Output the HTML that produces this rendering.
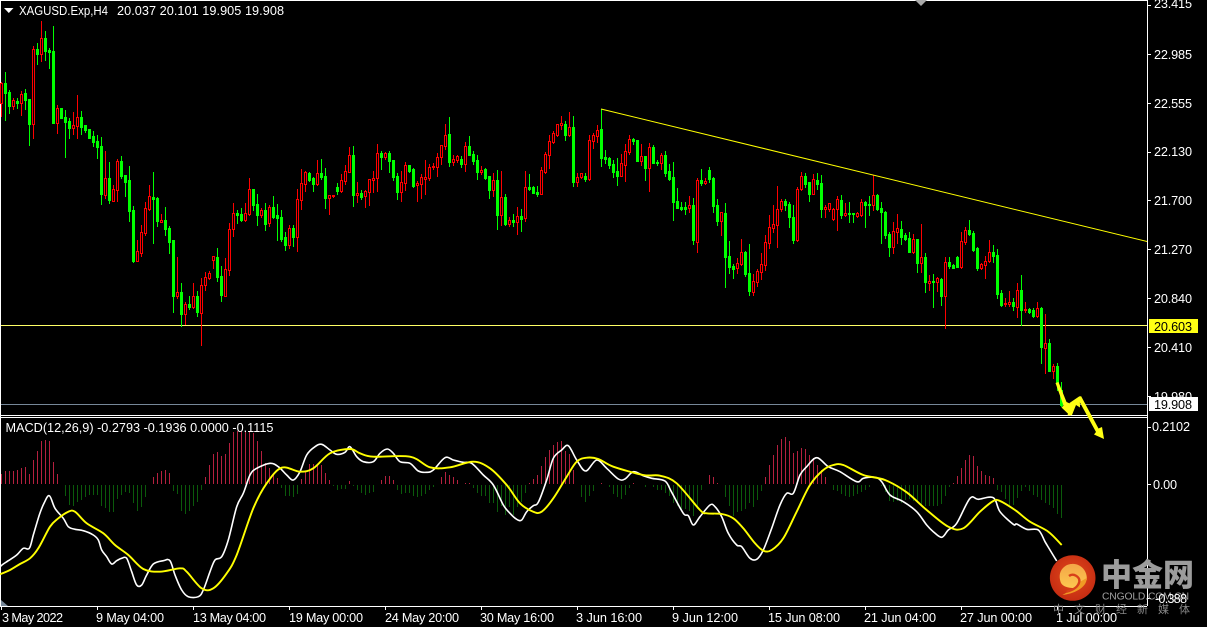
<!DOCTYPE html>
<html><head><meta charset="utf-8"><title>XAGUSD.Exp,H4</title>
<style>
html,body{margin:0;padding:0;background:#000;width:1207px;height:627px;overflow:hidden}
svg{display:block;position:absolute;left:0;top:0}
text{font-family:"Liberation Sans","Noto Sans CJK SC",sans-serif;font-size:12.7px;fill:#fff}
.c{shape-rendering:crispEdges}
</style></head><body>
<svg id="s" width="1207" height="627" viewBox="0 0 1207 627" xmlns="http://www.w3.org/2000/svg">
<rect width="1207" height="627" fill="#000"/>
<g class="c">
<path d="M0 .5H1147M.5 0V606M1147.5 0V606M0 415.5H1147M0 417.5H1147M0 606.5H1147" stroke="#fff" fill="none"/>
<path d="M1148 5.5h3M1148 54.5h3M1148 103.5h3M1148 152.5h3M1148 200.5h3M1148 249.5h3M1148 298.5h3M1148 347.5h3M1148 396.5h3M1148 427.5h3M1148 484.5h3M1148 598.5h3" stroke="#fff"/>
<path d="M1.5 606v4M97.5 606v4M193.5 606v4M289.5 606v4M385.5 606v4M481.5 606v4M577.5 606v4M673.5 606v4M769.5 606v4M865.5 606v4M961.5 606v4M1057.5 606v4" stroke="#fff"/>
<path d="M1 325.5H1147" stroke="#ffff66"/>
<path d="M1 404.5H1147" stroke="#778899"/>
</g>
<path d="M915 0h12l-6 6z" fill="#a9a9a9"/>
<path d="M1 600l7 6H1z" fill="#778899"/>
<path d="M4 8h9.5l-4.7 5z" fill="#fff"/>
<g id="hist" class="c"></g>
<g id="cand" class="c"></g>
<polyline points="601,109 1147,241.5" fill="none" stroke="#ffff00" stroke-width="1"/>
<g id="macd"></g>

<!-- yellow arrows -->
<path d="M1055.5 383L1058.5 382 1066.5 402 1072 404.5 1070.5 416 1061.5 407.5 1063.5 405.5z" fill="#ffff14"/>
<path d="M1067.5 415.5L1070 405 1069.5 403 1079.8 396 1080 407.5 1076 405 1072 415z" fill="#ffff14"/>
<path d="M1077.5 398L1081 396 1098.5 428.5 1102 427 1104 439 1094 434.5 1096 432z" fill="#ffff14"/>

<!-- axis labels -->
<text x="1154" y="8" textLength="38">23.415</text>
<text x="1154" y="59" textLength="38">22.985</text>
<text x="1154" y="108" textLength="38">22.555</text>
<text x="1154" y="156" textLength="38">22.130</text>
<text x="1154" y="205" textLength="38">21.700</text>
<text x="1154" y="254" textLength="38">21.270</text>
<text x="1154" y="303" textLength="38">20.840</text>
<text x="1154" y="352" textLength="38">20.410</text>
<text x="1154" y="401" textLength="38">19.980</text>
<rect x="1149" y="319" width="49" height="14" fill="#ffff14"/>
<text x="1154" y="331" textLength="38" style="fill:#000">20.603</text>
<rect x="1149" y="397" width="49" height="14" fill="#fff"/>
<text x="1154" y="409" textLength="38" style="fill:#000">19.908</text>
<text x="1152" y="431" textLength="38">0.2102</text>
<text x="1153" y="489" textLength="24">0.00</text>

<text x="19" y="15" textLength="89" lengthAdjust="spacingAndGlyphs">XAGUSD.Exp,H4</text>
<text x="117" y="15" textLength="167">20.037 20.101 19.905 19.908</text>
<text x="5.5" y="432" textLength="268" lengthAdjust="spacingAndGlyphs">MACD(12,26,9) -0.2793 -0.1936 0.0000 -0.1115</text>

<text x="2" y="622" textLength="61">3 May 2022</text>
<text x="96" y="622" textLength="68">9 May 04:00</text>
<text x="193" y="622" textLength="73">13 May 04:00</text>
<text x="289" y="622" textLength="74">19 May 00:00</text>
<text x="385" y="622" textLength="74">24 May 20:00</text>
<text x="480" y="622" textLength="74">30 May 16:00</text>
<text x="576" y="622" textLength="66">3 Jun 16:00</text>
<text x="672" y="622" textLength="66">9 Jun 12:00</text>
<text x="768" y="622" textLength="72">15 Jun 08:00</text>
<text x="864" y="622" textLength="72">21 Jun 04:00</text>
<text x="960" y="622" textLength="72">27 Jun 00:00</text>
<text x="1056" y="622" textLength="61">1 Jul 00:00</text>

<!-- watermark -->
<defs>
<radialGradient id="lg" cx=".5" cy=".45" r=".55"><stop offset="0" stop-color="#e24a1c"/><stop offset="1" stop-color="#c52c12"/></radialGradient>
<linearGradient id="lc" x1="0" y1="0" x2="0" y2="1"><stop offset="0" stop-color="#f3a647"/><stop offset="1" stop-color="#fdc850"/></linearGradient>
</defs>
<circle cx="1072.7" cy="578" r="22.8" fill="url(#lg)"/>
<path d="M1071.7 564C1080 563 1088 571 1086.7 580L1079 587C1073 589 1064 588 1061 583C1059 578 1059 572 1063 568C1066 565 1069 564 1071.7 564z" fill="url(#lc)"/>
<path d="M1062.3 595C1073 594 1087 588 1086.7 578L1078 583C1076 588 1070 591 1062.3 595z" fill="#f09a24"/>
<path d="M1069 576C1073.3 572.7 1080 576.7 1079.3 581.7C1078.3 586.7 1073.3 590 1066.7 591.7" fill="none" stroke="#d8401a" stroke-width="2.4"/>
<text x="1101" y="586" style="font-family:'Noto Sans CJK SC',sans-serif;font-size:31px;font-weight:900;fill:#9c9c9c" textLength="93">中金网</text>
<text x="1102" y="599.5" style="font-size:10.3px;fill:#a0a0a0" textLength="87">CNGOLD.COM.CN</text>
<text x="1053" y="613" style="font-family:'Noto Sans CJK SC',sans-serif;font-size:11px;fill:#888" textLength="137">中文财经新媒体</text>
<text x="1155" y="603" textLength="32">-0.388</text>
</svg>
<script>
var cd="r82,83,103,116 g72,83,93,120 g90,92,106,113 r98,100,106,109 g98,101,103,108 r91,94,103,115 g89,93,100,109 g99,99,124,145 r46,49,124,138 g43,49,54,64 r21,38,54,61 g31,38,51,60 g48,50,52,68 g26,51,123,123 r105,108,123,133 g108,108,118,118 g110,117,122,157 g118,121,128,138 r112,125,128,134 r95,117,126,138 g111,117,127,134 g125,125,130,132 g129,129,138,138 g131,136,142,146 g135,141,147,158 g137,146,194,204 r151,178,195,198 g162,178,200,203 r185,189,201,201 r159,161,190,201 g156,161,176,178 g175,175,182,196 g166,180,211,221 g206,210,261,262 r240,251,261,261 r225,232,253,256 r202,208,233,235 r185,196,209,210 g172,197,199,243 g197,198,221,226 r214,220,222,222 g207,220,229,235 g226,228,242,253 g240,240,296,312 r257,292,296,298 g283,292,314,326 r302,304,314,324 g296,304,307,309 r283,296,307,308 g291,296,312,316 r278,285,313,345 r272,277,285,290 r271,273,278,279 r256,256,260,268 g248,257,277,281 g266,276,295,301 r258,269,296,296 r223,229,270,275 r203,213,229,236 g210,213,215,223 g208,214,220,221 r203,213,220,221 r178,189,214,215 g189,189,205,210 g194,204,215,225 r208,210,215,217 g203,210,224,230 r205,207,223,226 g196,207,217,218 g204,215,218,240 g210,217,239,241 g232,237,245,250 r225,228,245,248 g225,228,237,246 r189,199,237,251 r169,183,200,209 r171,172,184,191 g172,173,180,181 g177,178,184,191 r160,173,184,185 g159,173,177,179 g168,176,198,208 r195,195,198,214 r195,195,196,197 g183,187,191,194 r174,180,191,192 r165,171,181,184 r147,155,172,172 g146,155,195,206 r182,193,195,202 g190,193,197,199 r190,191,196,207 r179,179,192,205 r171,178,180,192 r144,153,178,191 g151,153,157,169 r152,153,157,159 g151,153,161,172 g160,160,177,180 g173,176,192,199 r171,182,192,201 r162,165,183,190 g165,165,171,172 g168,169,186,187 r181,183,185,201 r174,177,184,198 r160,177,179,194 r164,167,178,180 r163,166,167,169 r153,157,167,176 r145,145,157,164 r124,135,146,149 g117,134,162,166 r155,159,162,165 r155,156,160,162 g156,159,164,167 r142,146,164,171 g136,146,155,155 g151,154,161,164 g155,160,172,179 r166,170,172,174 g168,169,178,179 g176,176,190,198 r173,180,190,196 g170,180,215,229 r171,197,215,225 g194,197,224,225 r217,220,224,226 g214,220,222,226 r207,216,222,234 g209,216,219,231 r171,187,218,221 g174,187,189,190 g186,187,193,193 g186,192,194,196 r167,170,194,194 r152,154,172,173 r135,141,155,168 r131,133,142,143 r124,124,135,136 r116,123,125,129 g121,124,135,140 r112,127,135,136 g116,127,182,186 r173,177,182,186 r173,173,177,178 g173,176,179,181 r135,140,179,180 r133,135,141,148 r125,130,136,142 g109,129,158,166 g150,157,159,163 g157,158,165,168 g160,164,172,177 g158,171,176,185 r154,163,176,176 r144,151,165,181 r135,139,152,154 g138,139,141,144 g140,140,161,161 r144,156,161,165 g156,156,168,180 r143,147,168,191 g145,147,163,163 g160,162,163,165 r153,155,163,169 g151,155,173,176 g164,171,179,180 g162,177,202,220 g188,201,208,208 g202,207,209,210 g202,207,209,214 r196,205,208,212 g198,205,240,244 r178,180,242,252 g169,180,183,185 r178,181,183,184 g167,170,179,182 g177,178,206,212 g199,205,221,225 r212,212,221,235 g203,213,257,287 g241,256,267,273 g264,266,269,278 r258,263,268,273 r239,252,264,265 g251,252,274,276 g244,273,291,295 r274,281,292,295 r269,271,282,286 r253,264,272,279 r235,242,265,270 r215,227,243,248 r205,224,228,232 r186,209,225,247 r199,201,209,211 g199,201,205,210 g202,204,217,227 g205,217,240,243 r187,189,240,241 r172,176,189,190 g173,176,184,187 g182,182,194,201 r174,179,194,194 g173,180,184,189 g175,183,209,217 r205,207,209,217 r203,203,209,211 r208,209,219,220 r196,199,209,230 g195,200,215,218 r203,213,215,216 g202,213,214,222 g213,213,214,222 r212,213,216,217 r199,202,215,216 g201,202,205,227 g196,204,205,215 r175,195,205,210 g194,195,209,210 g202,208,212,243 g211,212,235,238 g232,234,247,256 r222,231,247,253 r214,228,232,243 g221,229,237,244 g233,235,239,240 g232,238,252,252 r234,239,252,253 g239,239,263,272 r224,257,263,272 g253,257,282,292 r275,281,283,290 g274,281,282,307 r277,278,282,291 g278,279,296,305 r257,262,296,328 g257,262,266,268 g264,265,268,268 g256,257,267,267 r232,241,267,268 r227,230,242,244 g220,230,234,235 g231,233,250,251 g247,248,268,270 r263,264,268,269 r256,261,265,278 r240,252,261,262 g245,252,256,262 g249,255,294,298 g290,293,305,306 r298,303,304,306 r291,302,304,306 g298,302,306,310 r283,290,307,317 g275,290,310,325 r302,309,310,312 g308,309,312,313 g308,310,316,317 r302,308,316,317 g307,308,347,363 r314,343,348,373 g339,343,371,371 r364,366,371,378 g363,366,383,390 g382,390,405,406".split(" ");
var g="",r="",b="";
cd.forEach(function(s,k){var c=s[0],a=s.slice(1).split(",").map(Number),x=1+4*k,
 h=a[0],t=a[1],bo=a[2],l=a[3];
 var d="M"+x+" "+h+"h1V"+(l+1)+"h-1zM"+(x-1)+" "+t+"h3V"+(bo+1)+"h-3z";
 if(c=="g")g+=d;else{r+=d;if(bo-t>=2)b+="M"+x+" "+(t+1)+"h1V"+bo+"h-1z";}
});
document.getElementById("cand").innerHTML='<path d="'+g+'" fill="#00ff00"/><path d="'+r+'" fill="#ff0000"/><path d="'+b+'" fill="#000"/>';
var hv=[10,13,13,13,14,16,17,10,24,33,43,44,43,22,10,0,-11,-20,-21,-17,-15,-12,-10,-10,-10,-21,-23,-27,-27,-14,-10,-7,-8,-18,-26,-22,-12,0,7,11,13,14,11,-6,-9,-26,-29,-26,-21,-17,-5,7,19,30,32,28,30,41,52,53,53,53,52,51,43,33,21,16,10,6,-3,-11,-11,-12,-9,5,12,20,20,19,19,11,4,-1,-5,-4,-4,3,
-1,-5,-8,-10,-8,-7,0,4,8,8,4,-5,-9,-8,-8,-11,-12,-11,-9,-5,-2,0,7,12,9,7,4,0,1,1,-3,-8,-11,-11,-18,-18,-27,-21,-30,-22,-30,-22,-17,-8,1,5,9,18,27,34,39,42,43,33,30,14,0,-12,-17,-11,-6,0,1,0,-2,-9,-12,-14,-10,-3,1,0,0,-2,0,-2,-5,-5,-8,-11,-18,-21,-24,-24,-26,-31,-24,
-5,0,9,7,1,0,-12,-21,-31,-27,-26,-24,-18,-22,-15,-6,7,19,29,39,45,47,43,31,33,36,35,29,26,19,14,7,0,-5,-6,-9,-11,-12,-11,-9,-7,-5,-2,0,0,-1,-7,-16,-17,-16,-18,-15,-14,-16,-18,-21,-21,-21,-21,-21,-19,-11,-2,1,8,16,24,29,28,18,13,9,8,6,-5,
-7,-14,-20,-20,-13,-6,-2,-6,-10,-12,-15,-18,-20,-23,-29,-33];
var hr="",hg="";
hv.forEach(function(v,k){var x=1+4*k;if(v>0)hr+="M"+x+" "+(484-v)+"h1V484h-1z";else if(v<0)hg+="M"+x+" 485h1V"+(485-v)+"h-1z";});
document.getElementById("hist").innerHTML='<path d="'+hr+'" fill="#b5203f"/><path d="'+hg+'" fill="#0b5a0b"/>';
function pts(x0,y0,a,z){var o=[];for(var i=0;i<a.length;i+=2)o.push([x0+a[i]/z,y0+a[i+1]/z]);return o;}
function smooth(p){var d="M"+p[0][0].toFixed(1)+" "+p[0][1].toFixed(1);for(var i=0;i<p.length-1;i++){var a=p[i-1]||p[i],b=p[i],c=p[i+1],e=p[i+2]||c;
 d+="C"+(b[0]+(c[0]-a[0])/6).toFixed(1)+" "+(b[1]+(c[1]-a[1])/6).toFixed(1)+" "+(c[0]-(e[0]-b[0])/6).toFixed(1)+" "+(c[1]-(e[1]-b[1])/6).toFixed(1)+" "+c[0].toFixed(1)+" "+c[1].toFixed(1);}
 return d;}
var w=[].concat(pts(0,415,[0,455,10,447,25,437,50,420,70,400,88,400,100,360,118,300,132,265,148,242,165,280,190,310,205,335,225,343,250,347,280,360,295,375,305,405,320,425,335,447,350,437,365,430,380,430,395,470,410,510,425,510,440,480,460,447,490,437,510,437,525,480,545,525,565,545,595,545,610,525,630,470,645,435,665,425,685,375,710,275,730,235,750,180,770,160,810,145,835,155,860,180,880,195,900,170,920,120,945,95,965,88,990,105,1010,118,1035,112,1050,95],3),
pts(350,415,[20,125,40,140,70,140,90,115,112,102,130,115,150,140,180,145,205,168,230,172,250,165,285,128,310,135,340,142,365,145,400,180,430,210,460,270,480,295,500,313,515,315,530,290,550,272,565,262,590,195,610,130,635,105,655,92,680,135,707,168,740,135,770,160,805,192,825,192,850,170,880,182,905,190,945,198,965,232,1000,295,1015,302,1030,330,1050,305],3),
pts(700,415,[30,270,45,275,65,305,85,355,110,390,125,395,150,430,170,433,190,405,215,340,240,270,260,235,280,235,300,180,320,155,350,128,385,155,420,170,470,200,490,190,525,187,545,200,570,240,610,260,650,290,680,330,700,350,725,367,745,345,770,325,810,250,835,253,880,248,900,290],3),
pts(1000,500,[40,73,50,72,80,88,115,90,135,125,150,150,170,183],3));
var y=[].concat(pts(0,415,[0,478,30,465,60,447,90,430,115,400,150,335,175,310,205,290,225,290,260,325,310,355,345,390,385,420,430,462,480,470,540,460,560,470,605,520,640,520,680,475,710,420,760,280,800,205,845,158,900,170,940,160,990,115,1050,102],3),
pts(350,415,[30,115,70,125,180,125,240,157,300,157,370,140,420,160,470,210,510,265,550,290,575,290,610,250,650,185,680,140,710,128,745,132,790,155,880,180,930,182,980,205,1050,285],3),
pts(700,415,[20,295,65,297,100,310,130,340,165,385,190,407,215,405,250,370,290,290,330,210,370,165,400,150,430,150,490,180,555,195,620,232,680,285,745,335,790,340,840,290,880,258,900,258],3),
pts(1000,500,[45,30,90,65,145,95,185,135],3));
document.getElementById("macd").innerHTML='<path d="'+smooth(w)+'" fill="none" stroke="#fff" stroke-width="1.6" stroke-linejoin="round"/><path d="'+smooth(y)+'" fill="none" stroke="#ffff00" stroke-width="1.9" stroke-linejoin="round"/>';
</script>
</body></html>
